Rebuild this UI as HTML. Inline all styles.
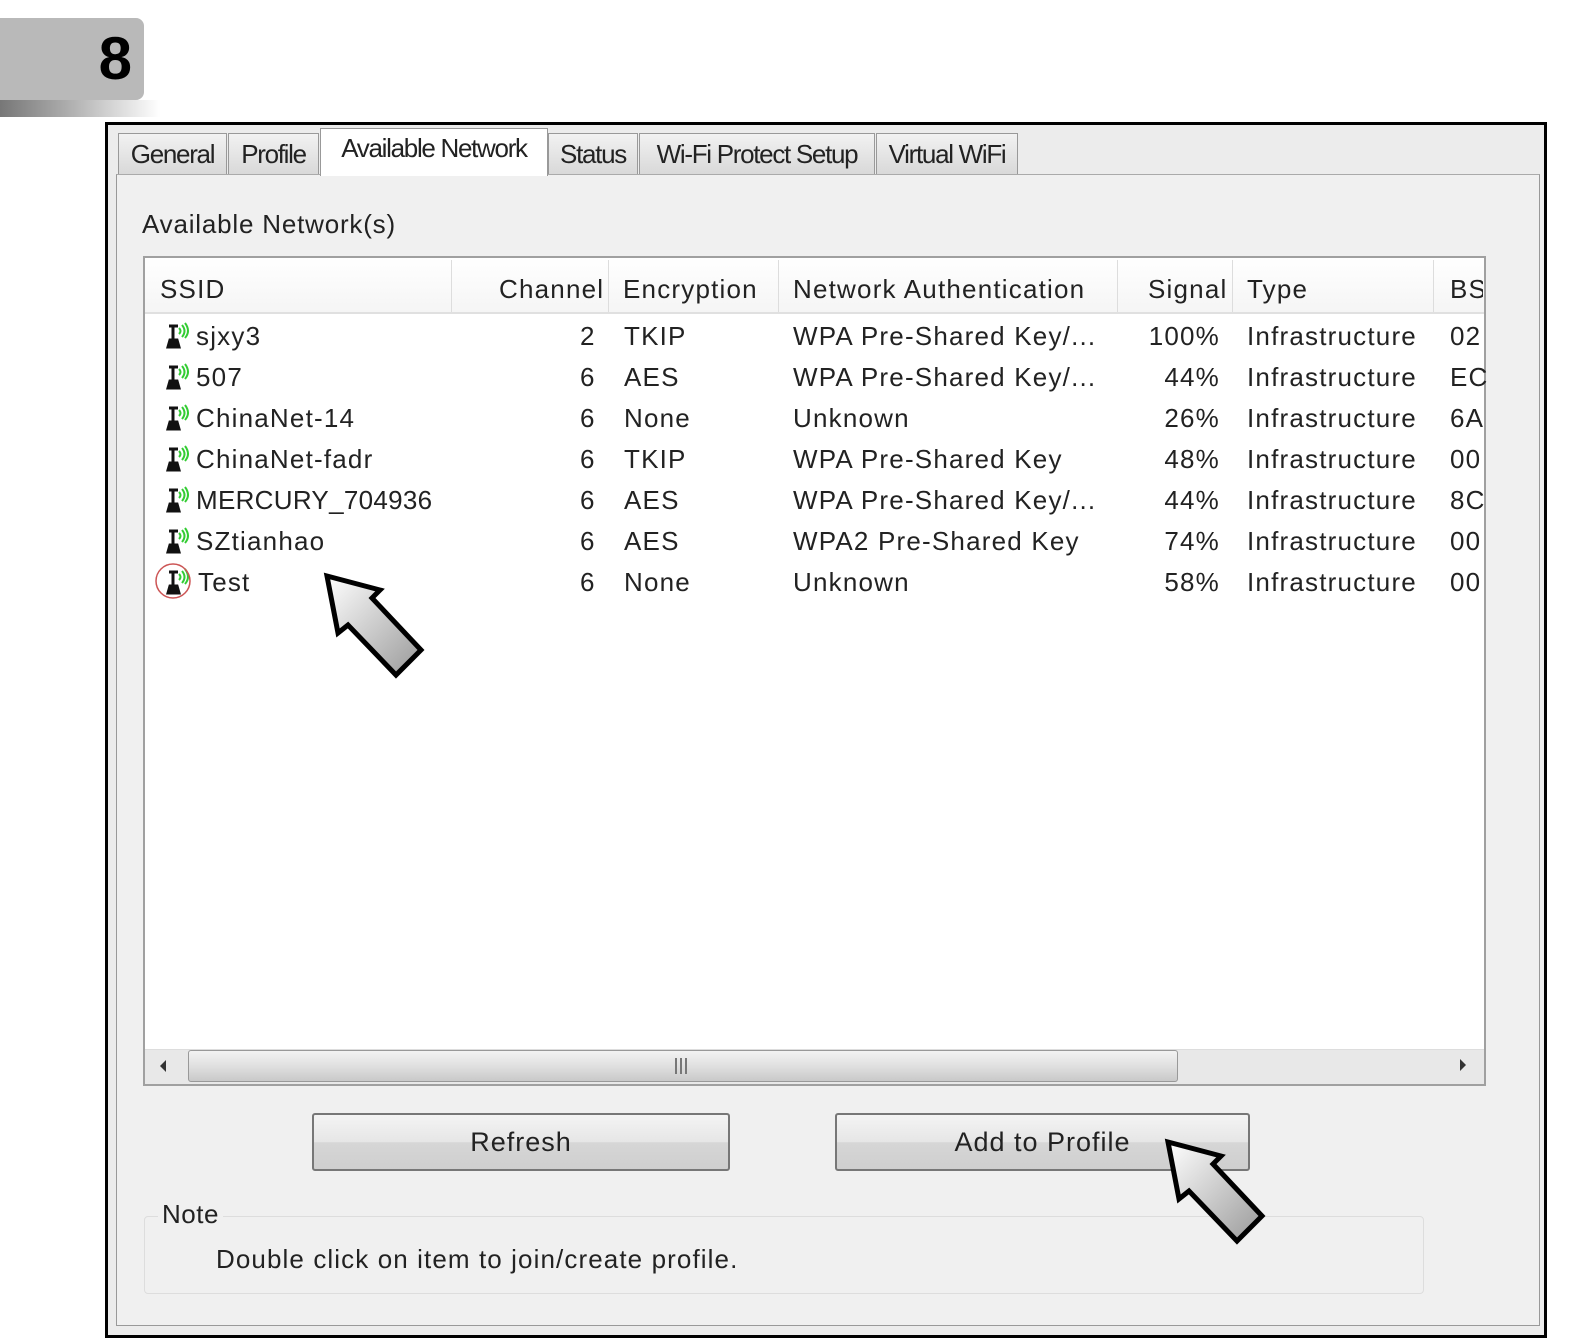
<!DOCTYPE html>
<html><head><meta charset="utf-8"><style>
*{margin:0;padding:0;box-sizing:border-box}
body{width:1574px;height:1342px;background:#fff;position:relative;overflow:hidden;font-family:"Liberation Sans",sans-serif;color:#222}
.a{position:absolute}
.badge{left:0;top:18px;width:144px;height:82px;background:#b9b9b9;border-radius:0 8px 8px 0}
.badge span{position:absolute;right:12px;top:6px;font:bold 60px "Liberation Sans",sans-serif;color:#000}
.grad{left:0;top:100px;width:160px;height:17px;background:linear-gradient(90deg,#777,#aaa 40%,#fff)}
.win{left:105px;top:122px;width:1442px;height:1216px;border:3px solid #000;background:#ececec}
.tab{position:absolute;top:8px;height:42px;background:linear-gradient(#f2f2f2,#d8d8d8);border:1px solid #999;border-bottom:none;font-size:26px;letter-spacing:-1.3px;text-align:center;line-height:40px;color:#222}
.tab.act{top:3px;height:48px;background:#fff;z-index:2;line-height:38px}
.panel{left:8px;top:49px;width:1424px;height:1152px;background:#f0f0f0;border:1px solid #999;border-top:1px solid #aaa}
.t{position:absolute;font-size:26px;white-space:nowrap;color:#222;letter-spacing:1.2px}
.list{left:143px;top:255px;width:1343px;height:831px;background:#fff;border:2px solid #a0a0a0;overflow:hidden}
.hdr{position:absolute;left:0;top:0;width:1339px;height:56px;background:linear-gradient(#fff,#f5f5f5);border-bottom:2px solid #e0e0e0}
.sep{position:absolute;top:2px;width:1px;height:52px;background:#ddd}
.btn{position:absolute;height:58px;border:2px solid #777;border-radius:3px;background:linear-gradient(#f4f4f4 0%,#e6e6e6 50%,#d6d6d6 51%,#cfcfcf);font-size:27px;letter-spacing:1px;text-align:center;line-height:54px;color:#222}
</style></head><body>
<div class="a badge"><span>8</span></div>
<div class="a grad"></div>
<div class="a win">
 <div class="tab" style="left:10px;width:109px">General</div>
 <div class="tab" style="left:120px;width:91px">Profile</div>
 <div class="tab act" style="left:212px;width:228px">Available Network</div>
 <div class="tab" style="left:440px;width:90px">Status</div>
 <div class="tab" style="left:531px;width:236px">Wi-Fi Protect Setup</div>
 <div class="tab" style="left:768px;width:142px">Virtual WiFi</div>
 <div class="a panel"></div>
</div>
<div class="t" style="left:142px;top:209px;letter-spacing:0.8px">Available Network(s)</div>
<div class="a list" style="top:256px;height:830px">
 <div class="hdr">
  <div class="sep" style="left:306px"></div><div class="sep" style="left:463px"></div><div class="sep" style="left:633px"></div><div class="sep" style="left:972px"></div><div class="sep" style="left:1087px"></div><div class="sep" style="left:1288px"></div>
 </div>
</div>
<div class="t" style="left:160px;top:274px">SSID</div>
<div class="t" style="left:499px;top:274px">Channel</div>
<div class="t" style="left:623px;top:274px">Encryption</div>
<div class="t" style="left:793px;top:274px">Network Authentication</div>
<div class="t" style="left:1148px;top:274px">Signal</div>
<div class="t" style="left:1247px;top:274px">Type</div>
<div class="t" style="left:1450px;top:274px;width:33px;overflow:hidden">BSSID</div>

<svg class="a" style="left:0;top:0" width="1574" height="1342">
 <defs><linearGradient id="ag" x1="0" y1="0" x2="1" y2="1"><stop offset="0" stop-color="#fff"/><stop offset="1" stop-color="#999"/></linearGradient>
 <g id="ic"><path d="M4 2h9M8 2v14M5 16h7l2 7H3z" stroke="#111" stroke-width="3" fill="#111"/><path d="M14 4q3 3 0 6M17 1q5 6 0 12M20 -1q6 8 0 15" stroke="#3c3" stroke-width="2" fill="none"/></g></defs>
 <use href="#ic" x="165" y="324"/><use href="#ic" x="165" y="365"/><use href="#ic" x="165" y="406"/><use href="#ic" x="165" y="447"/><use href="#ic" x="165" y="488"/><use href="#ic" x="165" y="529"/><use href="#ic" x="165" y="570"/>
 <circle cx="173" cy="581" r="17" fill="none" stroke="#c55" stroke-width="1.5"/>
 <polygon points="327,576 380,590 372,598 421,650 396,675 348,625 338,633" fill="url(#ag)" stroke="#000" stroke-width="5" stroke-linejoin="miter"/>
</svg>

<div class="t" style="left:196px;top:321px">sjxy3</div>
<div class="t" style="left:196px;top:362px">507</div>
<div class="t" style="left:196px;top:403px">ChinaNet-14</div>
<div class="t" style="left:196px;top:444px">ChinaNet-fadr</div>
<div class="t" style="left:196px;top:485px;letter-spacing:0.3px">MERCURY_704936</div>
<div class="t" style="left:196px;top:526px">SZtianhao</div>
<div class="t" style="left:198px;top:567px">Test</div>

<div class="t" style="left:580px;top:321px">2</div><div class="t" style="left:580px;top:362px">6</div><div class="t" style="left:580px;top:403px">6</div><div class="t" style="left:580px;top:444px">6</div><div class="t" style="left:580px;top:485px">6</div><div class="t" style="left:580px;top:526px">6</div><div class="t" style="left:580px;top:567px">6</div>

<div class="t" style="left:624px;top:321px">TKIP</div><div class="t" style="left:624px;top:362px">AES</div><div class="t" style="left:624px;top:403px">None</div><div class="t" style="left:624px;top:444px">TKIP</div><div class="t" style="left:624px;top:485px">AES</div><div class="t" style="left:624px;top:526px">AES</div><div class="t" style="left:624px;top:567px">None</div>

<div class="t" style="left:793px;top:321px">WPA Pre-Shared Key/...</div>
<div class="t" style="left:793px;top:362px">WPA Pre-Shared Key/...</div>
<div class="t" style="left:793px;top:403px">Unknown</div>
<div class="t" style="left:793px;top:444px">WPA Pre-Shared Key</div>
<div class="t" style="left:793px;top:485px">WPA Pre-Shared Key/...</div>
<div class="t" style="left:793px;top:526px">WPA2 Pre-Shared Key</div>
<div class="t" style="left:793px;top:567px">Unknown</div>

<div class="t" style="right:354px;top:321px">100%</div><div class="t" style="right:354px;top:362px">44%</div><div class="t" style="right:354px;top:403px">26%</div><div class="t" style="right:354px;top:444px">48%</div><div class="t" style="right:354px;top:485px">44%</div><div class="t" style="right:354px;top:526px">74%</div><div class="t" style="right:354px;top:567px">58%</div>

<div class="t" style="left:1247px;top:321px">Infrastructure</div><div class="t" style="left:1247px;top:362px">Infrastructure</div><div class="t" style="left:1247px;top:403px">Infrastructure</div><div class="t" style="left:1247px;top:444px">Infrastructure</div><div class="t" style="left:1247px;top:485px">Infrastructure</div><div class="t" style="left:1247px;top:526px">Infrastructure</div><div class="t" style="left:1247px;top:567px">Infrastructure</div>

<div class="t" style="left:1450px;top:321px">02</div><div class="t" style="left:1450px;top:362px">EC</div><div class="t" style="left:1450px;top:403px">6A</div><div class="t" style="left:1450px;top:444px">00</div><div class="t" style="left:1450px;top:485px">8C</div><div class="t" style="left:1450px;top:526px">00</div><div class="t" style="left:1450px;top:567px">00</div>

<div class="a" style="left:145px;top:1049px;width:1339px;height:35px;background:#e8e8e8;border-top:1px solid #ddd"></div>
<div class="a" style="left:188px;top:1050px;width:990px;height:32px;border:1px solid #999;border-radius:3px;background:linear-gradient(#f3f3f3,#e0e0e0 50%,#c9c9c9)"></div>
<div class="a" style="left:675px;top:1058px;width:12px;height:16px;border-left:2px solid #777;border-right:2px solid #777"><div style="margin-left:3px;width:2px;height:16px;background:#777"></div></div>
<div class="a" style="left:160px;top:1060px;width:0;height:0;border-top:6px solid transparent;border-bottom:6px solid transparent;border-right:6px solid #333"></div>
<div class="a" style="left:1460px;top:1059px;width:0;height:0;border-top:6px solid transparent;border-bottom:6px solid transparent;border-left:6px solid #333"></div>

<div class="btn" style="left:312px;top:1113px;width:418px">Refresh</div>
<div class="btn" style="left:835px;top:1113px;width:415px">Add to Profile</div>

<div class="a" style="left:144px;top:1216px;width:1280px;height:78px;border:1px solid #ddd;border-radius:4px;background:#f0f0f0"></div>
<div class="t" style="left:158px;top:1199px;background:#f0f0f0;padding:0 4px;letter-spacing:0.5px">Note</div>
<div class="t" style="left:216px;top:1244px;letter-spacing:1.1px">Double click on item to join/create profile.</div>
<svg class="a" style="left:0;top:0;pointer-events:none" width="1574" height="1342">
 <defs><linearGradient id="ag2" x1="0" y1="0" x2="1" y2="1"><stop offset="0" stop-color="#fff"/><stop offset="1" stop-color="#999"/></linearGradient></defs>
 <polygon points="1168,1142 1221,1156 1213,1164 1262,1216 1237,1241 1189,1191 1179,1199" fill="url(#ag2)" stroke="#000" stroke-width="5"/>
</svg>
</body></html>
